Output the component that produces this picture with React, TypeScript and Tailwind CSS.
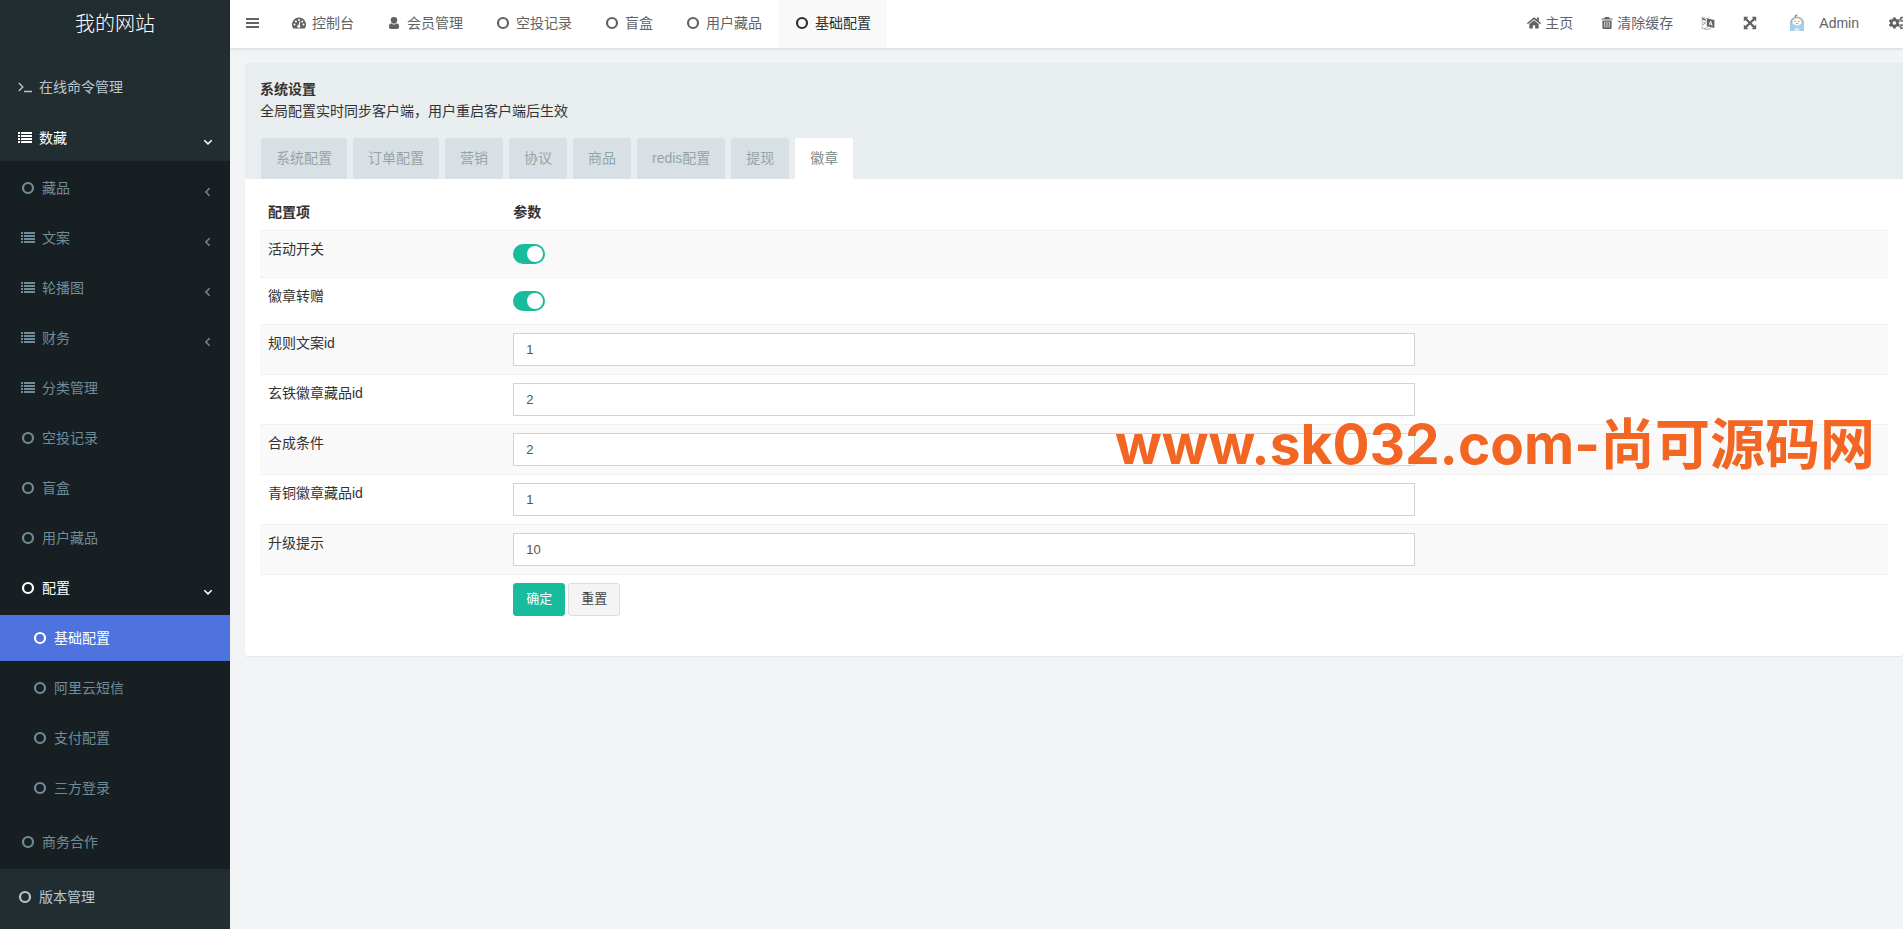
import { useState, type ReactNode } from 'react';
import { clsx } from 'clsx';
import { FaCogs, FaHome } from 'react-icons/fa';

type IconName = 'circle' | 'list' | 'terminal' | 'dashboard' | 'user';

interface MenuItem {
  label: string;
  icon: IconName;
  arrow?: boolean;
  open?: boolean;
  active?: boolean;
  children?: MenuItem[];
}

const MENU: MenuItem[] = [
  { label: '在线命令管理', icon: 'terminal' },
  {
    label: '数藏',
    icon: 'list',
    open: true,
    children: [
      { label: '藏品', icon: 'circle', arrow: true },
      { label: '文案', icon: 'list', arrow: true },
      { label: '轮播图', icon: 'list', arrow: true },
      { label: '财务', icon: 'list', arrow: true },
      { label: '分类管理', icon: 'list' },
      { label: '空投记录', icon: 'circle' },
      { label: '盲盒', icon: 'circle' },
      { label: '用户藏品', icon: 'circle' },
      {
        label: '配置',
        icon: 'circle',
        open: true,
        children: [
          { label: '基础配置', icon: 'circle', active: true },
          { label: '阿里云短信', icon: 'circle' },
          { label: '支付配置', icon: 'circle' },
          { label: '三方登录', icon: 'circle' },
        ],
      },
      { label: '商务合作', icon: 'circle' },
    ],
  },
  { label: '版本管理', icon: 'circle' },
];

const PAGE_TABS: { label: string; icon: IconName }[] = [
  { label: '控制台', icon: 'dashboard' },
  { label: '会员管理', icon: 'user' },
  { label: '空投记录', icon: 'circle' },
  { label: '盲盒', icon: 'circle' },
  { label: '用户藏品', icon: 'circle' },
  { label: '基础配置', icon: 'circle' },
];

const CONFIG_TABS = ['系统配置', '订单配置', '营销', '协议', '商品', 'redis配置', '提现', '徽章'];

const SWITCHES = [
  { id: 'activity', label: '活动开关' },
  { id: 'transfer', label: '徽章转赠' },
];

const FIELDS = [
  { id: 'rule_id', label: '规则文案id', value: '1' },
  { id: 'iron_id', label: '玄铁徽章藏品id', value: '2' },
  { id: 'compose', label: '合成条件', value: '2' },
  { id: 'bronze_id', label: '青铜徽章藏品id', value: '1' },
  { id: 'upgrade', label: '升级提示', value: '10' },
];

function Icon({ name }: { name: IconName }) {
  return (
    <svg viewBox="0 0 14 14" className="h-3.5 w-3.5" fill="currentColor" aria-hidden="true">
      {name === 'circle' && <circle cx="7" cy="7" r="5" fill="none" stroke="currentColor" strokeWidth="2.200" />}
      {name === 'list' && (
        <path d="M0 1h2v2H0zM3 1h11v2H3zM0 4h2v2H0zM3 4h11v2H3zM0 7h2v2H0zM3 7h11v2H3zM0 10h2v2H0zM3 10h11v2H3z" />
      )}
      {name === 'terminal' && (
        <path d="M.8 3l4 4-4 4M6 11.5h8" fill="none" stroke="currentColor" strokeWidth="1.4" />
      )}
      {name === 'dashboard' && (
        <>
          <path d="M7 1.6A7 7 0 0 0 1.1 12.300a.6.6 0 0 0 .5.3h10.800a.6.6 0 0 0 .5-.3A7 7 0 0 0 7 1.600z" />
          <g fill="#fff">
            <circle cx="2.500" cy="8.600" r="1" />
            <circle cx="3.900" cy="5.400" r="1" />
            <circle cx="7" cy="4" r="1" />
            <circle cx="10.200" cy="5.400" r="1" />
            <circle cx="11.500" cy="8.600" r="1" />
            <circle cx="6.800" cy="10.200" r="1.500" />
            <path d="M6.300 9.500l1.300-4 .9.300-1 4z" />
          </g>
        </>
      )}
      {name === 'user' && (
        <path d="M7 1a3.300 3.300 0 0 1 3.300 3.300C10.300 6.200 8.800 7.800 7 7.800S3.700 6.200 3.700 4.300A3.300 3.300 0 0 1 7 1zM4.200 7.200c.7.800 1.700 1.200 2.800 1.200s2.100-.4 2.800-1.200c1.800.2 2.300 2 2.300 3.800 0 1.200-.8 2-1.900 2H3.800c-1.100 0-1.900-.8-1.900-2 0-1.800.5-3.600 2.300-3.800z" />
      )}
    </svg>
  );
}

function Arrow({ open }: { open?: boolean }) {
  return (
    <svg viewBox="0 0 10 10" className="mt-2 ml-auto h-2.5 w-2.5" fill="none" stroke="currentColor" strokeWidth="1.500" aria-hidden="true">
      <path d={open ? 'M1.300 3.200L5 6.900l3.700-3.700' : 'M6.600 1.300L2.900 5l3.700 3.700'} />
    </svg>
  );
}

function SideItem({ item, level }: { item: MenuItem; level: number }) {
  const bright = item.open || item.active;

  return (
    <li>
      <a
        href="#"
        className={clsx(
          'flex h-[46px] items-center pr-[17px] hover:text-white',
          level === 0 && 'pl-[15px]',
          level === 1 && 'pl-[18px]',
          level === 2 && 'pl-[30px]',
          bright ? 'text-white' : level === 0 ? 'text-[#b8c7ce]' : 'text-[#6f8d99]',
          item.active && 'bg-[#4e73df]'
        )}
      >
        <span className="mr-1 flex w-5 justify-center">
          <Icon name={item.icon} />
        </span>
        <span>{item.label}</span>
        {(item.arrow || item.open) && <Arrow open={item.open} />}
      </a>
      {item.children && (
        <ul className="flex flex-col gap-1 bg-[#181f23] py-1">
          {item.children.map((child) => (
            <SideItem key={child.label} item={child} level={level + 1} />
          ))}
        </ul>
      )}
    </li>
  );
}

function Sidebar() {
  return (
    <aside className="w-[230px] shrink-0 bg-[#222d32]">
      <a href="#" className="flex h-12 items-center justify-center text-xl font-light text-white">
        我的网站
      </a>
      <nav className="pt-4">
        <ul className="flex flex-col gap-[5px]">
          {MENU.map((item) => (
            <SideItem key={item.label} item={item} level={0} />
          ))}
        </ul>
      </nav>
    </aside>
  );
}

function ToolButton({ label, children }: { label?: string; children: ReactNode }) {
  return (
    <button type="button" aria-label={label} className="flex items-center gap-1 px-[14px] whitespace-nowrap hover:bg-[#f9f9f9]">
      {children}
    </button>
  );
}

function Header() {
  return (
    <header className="flex h-12 overflow-hidden bg-white text-[#5f6364]">
      <button type="button" aria-label="切换菜单" className="flex w-[45px] shrink-0 items-center justify-center pb-0.5">
        <svg viewBox="0 0 13 12" className="h-3 w-[13px]" fill="currentColor">
          <path d="M0 1h13v2H0zM0 5h13v2H0zM0 9h13v2H0z" />
        </svg>
      </button>

      <nav className="flex">
        {PAGE_TABS.map((tab, index) => (
          <a
            key={tab.label}
            href="#"
            className={clsx(
              'flex items-center pr-4 pb-0.5 pl-[15px] whitespace-nowrap',
              index === PAGE_TABS.length - 1 && 'bg-[#f9f9f9] text-[#2c3033]'
            )}
          >
            <span className="mr-1 flex w-[18px] justify-center">
              <Icon name={tab.icon} />
            </span>
            {tab.label}
          </a>
        ))}
      </nav>

      <div className="-mr-4 ml-auto flex pb-0.5">
        <ToolButton>
          <FaHome className="h-3.5 w-3.5" />
          主页
        </ToolButton>
        <ToolButton>
          <svg viewBox="0 0 12 14" className="h-3.5 w-3" fill="currentColor">
            <path fillRule="evenodd" d="M4 1h4l.7 1.400H11.500v1.200H.5V2.400h2.800zM1.400 4.400h9.200v7.400c0 .8-.5 1.200-1.200 1.200H2.600c-.7 0-1.200-.4-1.200-1.200zM3.400 5.600v5.800h.8V5.600zM5.600 5.600v5.800h.8V5.600zM7.800 5.600v5.800h.8V5.600z" />
          </svg>
          清除缓存
        </ToolButton>
        <ToolButton label="语言">
          <svg viewBox="0 0 14 14" className="h-3.5 w-3.5">
            <path d="M1.200 1l5 1.600v9L1.200 13z" fill="#fff" stroke="#a3a7a8" strokeWidth=".7" />
            <path d="M6.200 2.800L8.600 1.500" stroke="#a3a7a8" strokeWidth=".8" />
            <path d="M6 2.400L13.400 4v8L6 10.200z" fill="#5f6364" />
            <path d="M8.200 8.900l1.500-3.900 1.500 4.900M8.800 7.800l2 .6" fill="none" stroke="#fff" strokeWidth=".9" />
            <path d="M1.200 1.800l3.600 1.400v1.600L1.200 3.400z" fill="#5f6364" />
            <path d="M2 5.600l3 3M4.800 5.400L2.200 9" fill="none" stroke="#8b8f90" strokeWidth=".8" />
            <path d="M3 12.800c3 .8 5 .6 7-.8" fill="none" stroke="#8b8f90" strokeWidth=".8" />
          </svg>
        </ToolButton>
        <ToolButton label="全屏">
          <svg viewBox="0 0 14 14" className="h-3.5 w-3.5" fill="currentColor">
            <path d="M.8.8H5.400L3.900 2.300 7 5.400l3.100-3.100L8.600.8h4.600v4.600l-1.500-1.500L8.600 7l3.100 3.100 1.500-1.500v4.600H8.600l1.500-1.500L7 8.600l-3.100 3.100 1.500 1.500H.8V8.600l1.500 1.500L5.400 7 2.300 3.900.8 5.400z" />
          </svg>
        </ToolButton>
        <ToolButton>
          <span className="mr-1.5 flex w-6 justify-center">
            <svg viewBox="0 0 16 18" className="h-[18px] w-4">
              <path d="M1 17V9a7 6.500 0 0 1 14 0v8z" fill="#a3cfe9" />
              <path d="M1.200 11V8.800a6.800 6 0 0 1 13.600 0V11l-3-5.500h-7z" fill="#b9b5ae" />
              <path d="M6.500 3.400C6.100 1.700 6.900.8 8.300 1.300" fill="none" stroke="#7f878b" strokeWidth="1.300" />
              <ellipse cx="8" cy="8" rx="4.600" ry="3.700" fill="#fdfaf3" />
              <path d="M5.300 7.400h1.700M9 7.400h1.700M6.800 9.600h2.400" stroke="#8a8f92" strokeWidth=".8" />
              <path d="M5.500 14.500l2.500-.8 2.500.8V17h-5z" fill="#d3eaf5" />
            </svg>
          </span>
          Admin
        </ToolButton>
        <ToolButton label="设置">
          <FaCogs className="ml-0.5 h-4 w-4" />
        </ToolButton>
      </div>
    </header>
  );
}

function ConfigPanel() {
  const [tab, setTab] = useState('徽章');

  return (
    <section className="rounded-[3px] bg-white shadow-[0_1px_1px_rgba(0,0,0,0.06)]">
      <div className="bg-[#e8edf0] px-[15px] pt-[15px]">
        <h1 className="leading-[22px] font-bold">系统设置</h1>
        <p className="leading-[22px]">全局配置实时同步客户端，用户重启客户端后生效</p>
        <div role="tablist" className="mt-4 flex gap-1.5 pl-px">
          {CONFIG_TABS.map((name) => (
            <button
              key={name}
              type="button"
              role="tab"
              aria-selected={name === tab}
              onClick={() => setTab(name)}
              className={clsx(
                'h-[41px] rounded-t-[3px] px-[15px] pb-0.5 whitespace-nowrap',
                name === tab ? 'bg-white text-[#7b8a8b]' : 'bg-[#d8e0e6] text-[#95a5a6]'
              )}
            >
              {name}
            </button>
          ))}
        </div>
      </div>

      <form className="px-[15px] pt-[15px] pb-8" onSubmit={(e) => e.preventDefault()}>
        <table className="w-full table-fixed text-left">
          <thead>
            <tr>
              <th className="w-[15%] p-2 font-bold">配置项</th>
              <th className="py-2 pr-2 pl-[9px] font-bold">参数</th>
            </tr>
          </thead>
          <tbody>
            {SWITCHES.map((row) => (
              <tr key={row.id} className="border-t border-[#f1f1f1] align-top odd:bg-[#f9f9f9]">
                <td className="p-2">
                  <label htmlFor={row.id}>{row.label}</label>
                </td>
                <td className="py-2 pr-2 pl-[9px]">
                  <input
                    id={row.id}
                    type="checkbox"
                    role="switch"
                    defaultChecked
                    className="my-[5px] flex h-5 w-8 cursor-pointer appearance-none items-center rounded-full bg-[#ccc] px-0.5 before:h-4 before:w-4 before:rounded-full before:bg-white checked:justify-end checked:bg-[#18bc9c]"
                  />
                </td>
              </tr>
            ))}
            {FIELDS.map((row) => (
              <tr key={row.id} className="border-t border-[#f1f1f1] align-top odd:bg-[#f9f9f9]">
                <td className="p-2">
                  <label htmlFor={row.id}>{row.label}</label>
                </td>
                <td className="py-2 pr-2 pl-[9px]">
                  <input
                    id={row.id}
                    type="text"
                    defaultValue={row.value}
                    className="block h-[33px] w-[66%] border border-[#d0d3d6] bg-white px-3 text-[13px] text-[#555] outline-none focus:border-[#18bc9c]"
                  />
                </td>
              </tr>
            ))}
          </tbody>
          <tfoot>
            <tr className="border-t border-[#f1f1f1]">
              <td className="p-2" />
              <td className="py-2 pr-2 pl-[9px]">
                <div className="flex gap-[3px] text-[13px]">
                  <button type="submit" className="h-[33px] rounded-[3px] border border-[#18bc9c] bg-[#18bc9c] px-3 text-white">
                    确定
                  </button>
                  <button type="reset" className="h-[33px] rounded-[3px] border border-[#ddd] bg-[#f4f4f4] px-3 text-[#444]">
                    重置
                  </button>
                </div>
              </td>
            </tr>
          </tfoot>
        </table>
      </form>
    </section>
  );
}

export default function App() {
  return (
    <div className="flex min-h-screen bg-[#f1f3f5] font-['Liberation_Sans','Noto_Sans_CJK_SC',sans-serif] text-sm text-[#333]">
      <Sidebar />
      <div className="relative min-w-0 flex-1">
        <div className="shadow-[0_1px_3px_rgba(0,0,0,0.12)]">
          <Header />
        </div>
        <main className="pt-[15px] pl-[15px]">
          <ConfigPanel />
        </main>

        {/* 站点水印 */}
        <div className="pointer-events-none absolute top-[412px] right-7 font-['Inter','Noto_Sans_CJK_SC',sans-serif] text-[55px] leading-[64px] font-bold whitespace-nowrap text-[#f26522]">
          www.sk032.com-尚可源码网
        </div>
      </div>
    </div>
  );
}
